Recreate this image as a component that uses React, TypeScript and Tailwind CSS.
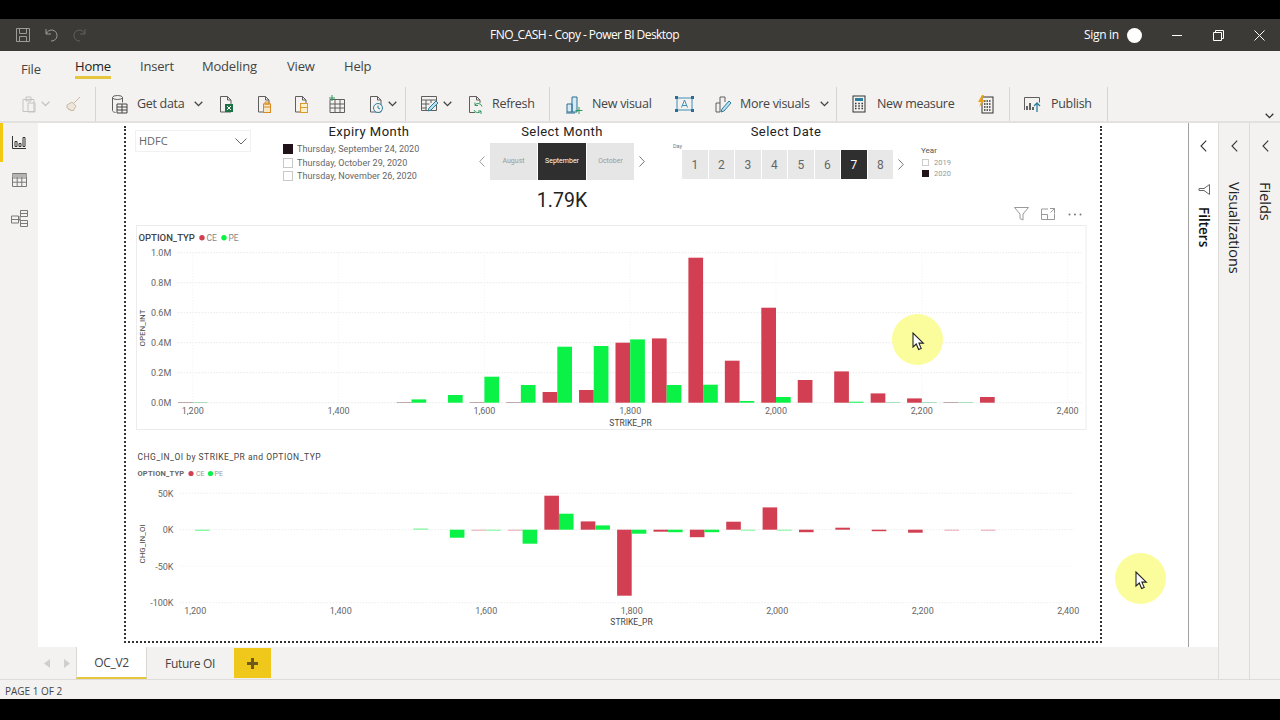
import React from "react";

const RED = "#d23f52";
const GREEN = "#0bf246";
const LINE = "#5f5e5c";

type SP = { children: React.ReactNode; w?: number; h?: number; vb?: string; cls?: string };
const Ico = ({ children, w = 18, h = 18, vb, cls = "" }: SP) => (
  <svg width={w} height={h} viewBox={vb ?? `0 0 ${w} ${h}`} fill="none" stroke={LINE} strokeWidth="1" className={`shrink-0 ${cls}`}>
    {children}
  </svg>
);
const Chev = ({ color = "#444" }: { color?: string }) => (
  <svg width="9" height="6" viewBox="0 0 9 6" fill="none" stroke={color} strokeWidth="1.3" className="shrink-0">
    <path d="M.7.8 4.5 4.6 8.3.8" />
  </svg>
);
const ChevSide = ({ dir, color = "#777", w = 6, h = 11 }: { dir: "l" | "r"; color?: string; w?: number; h?: number }) => (
  <svg width={w} height={h} viewBox="0 0 6 11" fill="none" stroke={color} strokeWidth="1" className="shrink-0">
    <path d={dir === "l" ? "M5.5.5 .7 5.5l4.8 5" : "M.5.5 5.3 5.5l-4.8 5"} />
  </svg>
);
const Sep = () => <div className="w-px h-[34px] bg-[#d6d5d3] shrink-0" />;
const DocBase = () => <path d="M3.5 1.5h7l3.5 3.5v12h-10.500zM10.500 1.500v3.500h3.500" />;

const Ribbon = () => (
  <div className="h-[72px] bg-[#f3f2f0] border-b-2 border-[#e2e1df] text-[#444] whitespace-nowrap">
    <div className="h-[36px] relative text-[13px] tracking-[-0.2px]">
      <div className="flex items-start pt-[6px] pl-[21px]">
        <span className="mt-[3px] w-[54px]">File</span>
        <span className="w-[65px] text-[#222] font-medium relative">
          Home
          <span className="absolute left-0 top-[19px] w-[36px] h-[3px] bg-[#e6c63e]" />
        </span>
        <span className="w-[62px]">Insert</span>
        <span className="w-[85px]">Modeling</span>
        <span className="w-[57px]">View</span>
        <span>Help</span>
      </div>
    </div>
    <div className="h-[34px] flex items-center text-[12.500px] tracking-[-0.3px] relative">
      <div className="w-[20px]" />
      <Ico w={17} h={18}><g stroke="#c4c3c1"><path d="M3 4.500h11v12h-11z" /><path d="M6 2h5v4h-5zM8 8h7v9h-7z" /></g></Ico>
      <div className="w-[4px]" />
      <Chev color="#c4c3c1" />
      <div className="w-[15px]" />
      <Ico w={17} h={18}><g stroke="#c9b9a2"><path d="M15 2 9 8M2 10l5-3 4 4-3 5-1-1-1 1-1-2-1 1-1-2-1 0z" fill="#ece6dc" /></g></Ico>
      <div className="w-[13px]" />
      <Sep />
      <div className="w-[15px]" />
      <Ico w={17} h={20}><ellipse cx="6.500" cy="3.500" rx="5" ry="2" /><path d="M1.500 3.500v13c0 1 1.500 1.800 3 2" /><path d="M11.500 3.500v5" /><path d="M6 10h10v9h-10zM6 13h10M6 16h10M11 10v9" stroke="#444" /></Ico>
      <span className="ml-[9px] w-[49px]">Get data</span>
      <div className="w-[8px]" />
      <Chev />
      <div className="w-[14px]" />
      <Ico w={17} h={19}><DocBase /><rect x="8" y="9" width="8" height="8" fill="#1e7145" stroke="none" /><path d="m10 11 4 4m0-4-4 4" stroke="#fff" /></Ico>
      <div className="w-[21px]" />
      <Ico w={17} h={19}><DocBase /><rect x="8.500" y="9" width="7" height="8.500" fill="#f6e7c8" stroke="#d98a1f" /><path d="M10 7h4v2h-4zM8.500 12h7" stroke="#d98a1f" /></Ico>
      <div className="w-[20px]" />
      <Ico w={17} h={19}><DocBase /><rect x="8.500" y="8.500" width="7" height="9" fill="#fbefd2" stroke="#dd9a2a" /><path d="M8.500 12.500h7" stroke="#dd9a2a" /></Ico>
      <div className="w-[19px]" />
      <Ico w={17} h={18}><path d="M2 4.500h14.500v13h-14.500zM2 9h14.500M2 13h14.500M7 4.500v13M12 4.500v13" /><path d="M4 0v6M1 3h6" stroke="#2d9a5a" /></Ico>
      <div className="w-[22px]" />
      <Ico w={17} h={19}><DocBase /><circle cx="11" cy="13" r="4.500" fill="#f3f2f0" stroke="#2a7f9e" /><path d="M11 10.500v2.500l2 1" stroke="#2a7f9e" /></Ico>
      <div className="w-[4px]" />
      <Chev />
      <div className="w-[8px]" />
      <Sep />
      <div className="w-[14px]" />
      <Ico w={19} h={18}><path d="M1.500 1.500h15v14h-15zM1.500 5h15M1.500 9h8M1.500 13h5M6 5v10M11 5v3" /><path d="m8 16 1-3 7-7 2 2-7 7z" fill="#bcdff0" stroke="#2a7f9e" /></Ico>
      <div className="w-[4px]" />
      <Chev />
      <div className="w-[14px]" />
      <Ico w={17} h={19}><path d="M9 17.500h-5.500v-16h7l3.500 3.500v3M10.500 1.500v3.500h3.500" /><path d="M16 11.500a4 4 0 0 0-7-1.500M8 15a4 4 0 0 0 7 1" stroke="#2e9a63" /><path d="M9 7.500v3h3M15 19v-3h-3" stroke="#2e9a63" /></Ico>
      <span className="ml-[9px] w-[42px]">Refresh</span>
      <div className="w-[15px]" />
      <Sep />
      <div className="w-[15px]" />
      <Ico w={18} h={19}><path d="M7 2h5v15h-5zM2 9h5v8h-5z" stroke="#2a6f93" fill="#d8ebf4" /><path d="M1 18h9" stroke="#2a6f93" /><path d="M14 12v7M10.500 15.500h7" stroke="#2a9a5a" /></Ico>
      <span className="ml-[9px] w-[63px]">New visual</span>
      <div className="w-[20px]" />
      <Ico w={19} h={16}><path d="M2 2h15v12h-15z" stroke="#3c8fb3" /><path d="M6.500 11.500 9.500 4l3 7.500M7.500 9.500h4" stroke="#3c8fb3" /><g fill="#2a6f93" stroke="none"><rect x="0" y="0" width="3" height="3" /><rect x="16" y="0" width="3" height="3" /><rect x="0" y="13" width="3" height="3" /><rect x="16" y="13" width="3" height="3" /></g></Ico>
      <div className="w-[20px]" />
      <Ico w={18} h={20}><path d="M2 9h4v9h-4zM6 3h5v5M6 9v-6" /><path d="m7 18 1-3 7-8 2 2-7 8z" fill="#bcdff0" stroke="#2a7f9e" /></Ico>
      <span className="ml-[8px] w-[72px]">More visuals</span>
      <div className="w-[8px]" />
      <Chev />
      <div className="w-[7px]" />
      <Sep />
      <div className="w-[15px]" />
      <Ico w={14} h={18}><rect x="1" y="1" width="12" height="16" stroke="#333" /><rect x="3" y="3" width="8" height="3" fill="#2a7f9e" stroke="none" /><path d="M3 8.500h1.500M6.300 8.500h1.500M9.500 8.500h1.500M3 11h1.500M6.300 11h1.500M9.500 11h1.500M3 13.500h1.500M6.300 13.500h1.500M9.500 13.500h1.500" stroke="#333" strokeWidth="1.500" /></Ico>
      <span className="ml-[11px] w-[80px]">New measure</span>
      <div className="w-[20px]" />
      <Ico w={17} h={19}><rect x="5" y="2" width="11" height="16" stroke="#333" /><path d="M7 6h7M7 9h7M7 12h7M7 15h7" stroke="#333" strokeWidth="1.500" strokeDasharray="1.500 1" /><path d="M5 0 1 7h3l-2 5 6-7h-3l2-5z" fill="#e8a317" stroke="none" /></Ico>
      <div className="w-[15px]" />
      <Sep />
      <div className="w-[13px]" />
      <Ico w={19} h={17}><path d="M1.500 14v-12.500h15v5" /><path d="M4 14v-4M7 14v-7M10 14v-3" stroke="#333" strokeWidth="1.500" /><path d="M14 16v-9M11 10l3-3 3 3" stroke="#2a7f9e" strokeWidth="1.300" /></Ico>
      <span className="ml-[9px] w-[41px]">Publish</span>
      <div className="w-[15px]" />
      <Sep />
      <div className="absolute right-[6px] top-[26px]"><Chev color="#333" /></div>
    </div>
  </div>
);

const TitleBar = () => (
  <div className="h-[32px] bg-[#3b3a36] flex items-center text-white text-[12px] relative whitespace-nowrap">
    <div className="flex items-center pl-[16px]">
      <Ico w={14} h={14}><g stroke="#9c9b98"><path d="M.5.500h13v13h-13zM3.500.500v5h7v-5M3.500 13.500v-5h7v5" /></g></Ico>
      <div className="w-[14px]" />
      <Ico w={14} h={14}><g stroke="#9c9b98"><path d="M2 1v5h5M2.300 5.800A5.500 5.500 0 1 1 7 13" /></g></Ico>
      <div className="w-[15px]" />
      <Ico w={14} h={14}><g stroke="#62615e"><path d="M12 1v5h-5M11.700 5.800A5.500 5.500 0 1 0 7 13" /></g></Ico>
    </div>
    <span className="ml-[403px] w-[594px] tracking-[-0.55px]">FNO_CASH - Copy - Power BI Desktop</span>
    <span className="w-[43px] tracking-[-0.3px]">Sign in</span>
    <div className="w-[15px] h-[15px] rounded-full bg-white" />
    <div className="ml-[30px] w-[10px] h-px bg-white" />
    <div className="ml-[31px]"><Ico w={11} h={11}><g stroke="#fff"><path d="M2.500 2.500v-2h8v8h-2M.5 2.500h8v8h-8z" /></g></Ico></div>
    <div className="ml-[30px]"><Ico w={11} h={11}><g stroke="#fff"><path d="m.5.500 10 10m0-10-10 10" /></g></Ico></div>
  </div>
);

const Rail = () => (
  <div className="w-[38px] bg-[#f3f2f0] flex flex-col items-center relative">
    <div className="absolute left-0 top-0 w-[3px] h-[39px] bg-[#f2c811]" />
    <div className="h-[38px] flex items-center">
      <Ico w={14} h={13}><g stroke="#333"><path d="M.5 0v12.500h13.500" /><path d="M3 10.500v-5h2v5zM7 10.500v-3h2v3zM11 10.500v-9h2v9z" /></g></Ico>
    </div>
    <div className="h-[38px] flex items-center">
      <Ico w={15} h={14}><g stroke="#7a7977"><path d="M.5.500h14v13h-14zM.5 5h14M.5 9.200h14M5.200 3v10.500M9.800 3v10.500" /><path d="M.5 2.500h14" strokeWidth="3" stroke="#b5b4b2" /></g></Ico>
    </div>
    <div className="h-[38px] flex items-center">
      <Ico w={17} h={17}><g stroke="#7a7977"><path d="M.5 6h7v7h-7zM.5 9.500h7M9.500.5h7v6h-7zM9.500 3.500h7M9.500 10.500h7v6h-7zM9.500 13.500h7M7.500 9.500h2M9 6v5" /></g></Ico>
    </div>
  </div>
);

const Slicers = () => (
  <div className="h-[81px] flex items-start text-[#444] whitespace-nowrap">
    <div className="ml-[9px] mt-[4px] w-[116px] h-[22px] border border-[#f1f1f1] flex items-center justify-between pl-[3px] pr-[3px] text-[11px] text-[#666]">
      <span>HDFC</span>
      <svg width="12" height="7" viewBox="0 0 12 7" fill="none" stroke="#666" strokeWidth="1"><path d="m.5.500 5.500 5.500 5.500-5.500" /></svg>
    </div>
    <div className="ml-[32px] w-[172px] font-[Roboto]">
      <div className="text-center text-[13px] tracking-[0.45px] text-[#222] leading-[11px]">Expiry Month</div>
      <div className="mt-[7px] flex flex-col gap-[3.500px] text-[9px] leading-[10px] text-[#666] tracking-[0.05px]">
        <div className="flex items-center gap-[4px]"><span className="w-[10px] h-[10px] bg-[#20141a]" /><span>Thursday, September 24, 2020</span></div>
        <div className="flex items-center gap-[4px]"><span className="w-[10px] h-[10px] border border-[#c9c9c9]" /><span>Thursday, October 29, 2020</span></div>
        <div className="flex items-center gap-[4px]"><span className="w-[10px] h-[10px] border border-[#c9c9c9]" /><span>Thursday, November 26, 2020</span></div>
      </div>
    </div>
    <div className="ml-[23px] w-[168px] font-[Roboto] flex flex-col items-center">
      <div className="text-center text-[13px] tracking-[0.45px] text-[#222] leading-[11px]">Select Month</div>
      <div className="mt-[6px] flex items-center">
        <ChevSide dir="l" color="#999" />
        <div className="ml-[5px] flex gap-[1px] text-[7px]">
          <span className="w-[47.500px] h-[37px] bg-[#e6e6e6] flex items-center justify-center text-[#999]">August</span>
          <span className="w-[47.500px] h-[37px] bg-[#2f2f2f] flex items-center justify-center text-white">September</span>
          <span className="w-[47.500px] h-[37px] bg-[#e6e6e6] flex items-center justify-center text-[#999]">October</span>
        </div>
        <div className="ml-[5px]"><ChevSide dir="r" color="#777" /></div>
      </div>
      <div className="mt-[9px] text-[19.500px] leading-[24px] text-[#222]">1.79K</div>
    </div>
    <div className="ml-[24px] w-[232px] font-[Roboto] relative">
      <div className="text-center text-[13px] tracking-[0.45px] text-[#222] leading-[11px]">Select Date</div>
      <div className="text-[5.500px] leading-[6px] text-[#777] ml-[3px] mt-[6px]">Day</div>
      <div className="mt-[1px] ml-[12px] flex items-center">
        <div className="flex gap-[1px] text-[12px] text-[#666]">
          {[1, 2, 3, 4, 5, 6, 7, 8].map((d) => (
            <span key={d} className={d === 7 ? "w-[25.500px] h-[29px] bg-[#2f2f2f] text-white flex items-center justify-center" : "w-[25.500px] h-[29px] bg-[#e8e8e8] flex items-center justify-center"}>{d}</span>
          ))}
        </div>
        <div className="ml-[5px]"><ChevSide dir="r" color="#777" /></div>
      </div>
    </div>
    <div className="ml-[20px] mt-[20px] font-[Roboto] text-[8px] text-[#555]">
      <div className="leading-[9px] -ml-[1px]">Year</div>
      <div className="mt-[3px] flex items-center gap-[5px] text-[7.500px] text-[#999] leading-[9px]"><span className="w-[7px] h-[7px] border border-[#ccc]" />2019</div>
      <div className="mt-[2px] flex items-center gap-[5px] text-[7.500px] text-[#999] leading-[9px]"><span className="w-[7px] h-[7px] bg-[#20141a]" />2020</div>
    </div>
  </div>
);

const HeaderIcons = () => (
  <div className="h-[14px] flex items-center pl-[888px]">
    <svg width="15" height="14" viewBox="0 0 15 14" fill="none" stroke="#999"><path d="M.5.500h14l-5.500 6.500v6l-3-1.500v-4.500z" /></svg>
    <svg width="14" height="12" viewBox="0 0 14 12" fill="none" stroke="#999" className="ml-[12px]"><path d="M7 1h-6.500v10.500h13v-6M.5 6.500h6v5M9 .5h4.500v4.500M13.500.5l-4 4" /></svg>
    <svg width="14" height="3" viewBox="0 0 14 3" fill="#777" className="ml-[13px]"><circle cx="1.500" cy="1.500" r="1" /><circle cx="7" cy="1.500" r="1" /><circle cx="12.500" cy="1.500" r="1" /></svg>
  </div>
);

type Bar = [number, number, number];
const data1: Bar[] = [
  [1200, 0.5, 0.5], [1500, 0.5, 3.3], [1550, 0, 7.7], [1600, 0.5, 26], [1650, 0.5, 17.7], [1700, 10.7, 56], [1750, 12.7, 56.7],
  [1800, 60, 63.3], [1850, 64.3, 17.7], [1900, 145, 18], [1950, 42, 1.7], [2000, 95, 5.7], [2050, 22.7, 0], [2100, 31.3, 1],
  [2150, 9.3, 0.5], [2200, 4.3, 0.5], [2250, 0.5, 0.5], [2300, 5.7, 0],
];
const data2: Bar[] = [
  [1200, 0, -1.2], [1500, 0, 1.2], [1550, 0, -8], [1600, -1, -1], [1650, -1, -14], [1700, 34, 16], [1750, 8.3, 4.3], [1800, -66, -4],
  [1850, -2, -2.5], [1900, -7.5, -2.5], [1950, 8, -1], [2000, 22.3, -1], [2050, -2.5, 0], [2100, 2, 0], [2150, -1.5, 0], [2200, -3, 0],
  [2250, -1, 0], [2300, -1, 0],
];
const ticks = [1200, 1400, 1600, 1800, 2000, 2200, 2400];

const Chart1 = () => {
  const x = (s: number) => 193.3 + (s - 1200) * 0.729;
  const base = 402.7;
  return (
    <svg width="951" height="205" viewBox="136.500 225 951 205" className="block" fontFamily="Roboto, sans-serif">
      <rect x="137" y="225.500" width="949.500" height="204" fill="#fff" stroke="#ececec" />
      <text x="139" y="241" fontSize="9.500" fontWeight="500" fill="#444">OPTION_TYP</text>
      <circle cx="202.500" cy="237.800" r="2.700" fill={RED} />
      <text x="207" y="241" fontSize="8.500" fill="#888">CE</text>
      <circle cx="224.500" cy="237.800" r="2.700" fill={GREEN} />
      <text x="229" y="241" fontSize="8.500" fill="#888">PE</text>
      {[0, 0.2, 0.4, 0.6, 0.8, 1].map((v) => {
        const y = base - v * 150;
        return (
          <g key={v}>
            <line x1="178" x2="1082" y1={y} y2={y} stroke="#e9e9e9" strokeDasharray="1.500 1.500" />
            <text x="171.800" y={y + 3.500} textAnchor="end" fontSize="9" fill="#666">{v.toFixed(1)}M</text>
          </g>
        );
      })}
      {ticks.map((t) => (
        <g key={t}>
          <line x1={x(t)} x2={x(t)} y1="252" y2={base} stroke="#f5f5f5" strokeDasharray="1.500 1.500" />
          <text x={x(t)} y="414" textAnchor="middle" fontSize="9" fill="#666">{t.toLocaleString("en-US")}</text>
        </g>
      ))}
      {data1.map(([s, c, p]) => (
        <g key={s}>
          {c > 0 && <rect x={x(s) - 14.7} y={base - c} width="14.7" height={c} fill={c < 1 ? "#8a5a60" : RED} />}
          {p > 0 && <rect x={x(s)} y={base - p} width="14.7" height={p} fill={p < 1 ? "#5dc983" : GREEN} />}
        </g>
      ))}
      <text x="631" y="425.500" textAnchor="middle" fontSize="8.500" fill="#444">STRIKE_PR</text>
      <text transform="translate(145 328) rotate(-90)" textAnchor="middle" fontSize="8" fill="#444">OPEN_INT</text>
    </svg>
  );
};

const Chart2 = () => {
  const x = (s: number) => 195.7 + (s - 1200) * 0.7275;
  const base = 529.7;
  return (
    <svg width="951" height="190" viewBox="136.500 445 951 190" className="block mt-[15px]" fontFamily="Roboto, sans-serif">
      <text x="138" y="460" fontSize="8.500" letterSpacing="0.5" fill="#444">CHG_IN_OI by STRIKE_PR and OPTION_TYP</text>
      <text x="138" y="476" fontSize="7.500" fontWeight="700" letterSpacing="0.2" fill="#666">OPTION_TYP</text>
      <circle cx="191.500" cy="473.500" r="2.600" fill={RED} />
      <text x="196.500" y="476" fontSize="7" fill="#999">CE</text>
      <circle cx="211" cy="473.500" r="2.600" fill={GREEN} />
      <text x="215" y="476" fontSize="7" fill="#999">PE</text>
      {[[50, "50K"], [0, "0K"], [-50, "-50K"], [-100, "-100K"]].map(([v, l]) => {
        const y = base - (v as number) * 0.73;
        return (
          <g key={l as string}>
            <line x1="180" x2="1075" y1={y} y2={y} stroke={v === -50 ? "#f5f5f5" : "#ededed"} strokeDasharray="1.500 1.500" />
            <text x="174" y={y + 3.500} textAnchor="end" fontSize="9" fill="#666">{l}</text>
          </g>
        );
      })}
      {ticks.map((t) => (
        <text key={t} x={x(t)} y="614" textAnchor="middle" fontSize="9" fill="#666">{t.toLocaleString("en-US")}</text>
      ))}
      {data2.map(([s, c, p]) => {
        const rc = Math.abs(c);
        const rp = Math.abs(p);
        return (
          <g key={s}>
            {c !== 0 && <rect x={x(s) - 14.6} y={c > 0 ? base - c : base} width="14.6" height={rc} fill={RED} opacity={rc <= 1 ? 0.45 : 1} />}
            {p !== 0 && <rect x={x(s)} y={p > 0 ? base - p : base} width="14.6" height={rp} fill={GREEN} opacity={rp <= 1.2 ? 0.55 : 1} />}
          </g>
        );
      })}
      <text x="632" y="624.500" textAnchor="middle" fontSize="8.500" fill="#444">STRIKE_PR</text>
      <text transform="translate(145 544) rotate(-90)" textAnchor="middle" fontSize="8" fill="#444">CHG_IN_OI</text>
    </svg>
  );
};

const Arrow = () => (
  <svg width="13" height="19" viewBox="0 0 13 19" fill="#fff" stroke="#222" strokeWidth="1.100">
    <path d="M1 1v14l3.300-3 2.300 5.500 2.600-1.100-2.300-5.300h4.400z" />
  </svg>
);
const Highlight = ({ cls }: { cls: string }) => (
  <div className={`absolute w-[51px] h-[51px] rounded-full bg-[#fbfd9c] flex items-center justify-center pl-[1px] pt-[3px] ${cls}`}>
    <Arrow />
  </div>
);

const Pane = ({ label, cls }: { label: string; cls: string }) => (
  <div className={`w-[31px] flex flex-col items-center pt-[17px] ${cls}`}>
    <ChevSide dir="l" color="#333" w={7} h={12} />
    <div className="mt-[30px] [writing-mode:vertical-rl] text-[14.500px] leading-[16px] text-[#222]">{label}</div>
  </div>
);

export default function App() {
  return (
    <div className="w-[1280px] h-[720px] bg-black pt-[19px] overflow-hidden relative [font-family:'Open_Sans',sans-serif]">
      <TitleBar />
      <Ribbon />
      <div className="h-[557px] flex border-b border-[#dddcda]">
        <Rail />
        <div className="w-[1180px] flex flex-col">
          <div className="h-[525px] flex">
            <div className="w-[1150px] bg-white pl-[86px] pt-[3px]">
              <div className="w-[978px] h-[517px] border-x-2 border-b-2 border-dotted border-[#333]">
                <Slicers />
                <HeaderIcons />
                <div className="ml-[10px] mt-[4px]">
                  <Chart1 />
                  <Chart2 />
                </div>
              </div>
            </div>
            <div className="w-[30px] bg-white border-l-[1.500px] border-[#a0a0a0] flex flex-col items-center pt-[17px]">
              <ChevSide dir="l" color="#333" w={7} h={12} />
              <svg width="12" height="11" viewBox="0 0 12 11" fill="none" stroke="#666" className="mt-[32px]"><path d="M11.500.5v10L6 6.500H1v-2h5z" /></svg>
              <div className="mt-[12px] [writing-mode:vertical-rl] text-[13.500px] leading-[16px] text-[#111] font-semibold">Filters</div>
            </div>
          </div>
          <div className="h-[32px] bg-[#f3f2f0] flex items-stretch text-[12px] text-[#444] tracking-[-0.3px]">
            <div className="w-[38px] flex items-center justify-between pl-[6px] pr-[6px]">
              <svg width="6" height="9" viewBox="0 0 6 9" fill="#cfcecc"><path d="M6 0v9L0 4.500z" /></svg>
              <svg width="6" height="9" viewBox="0 0 6 9" fill="#cfcecc"><path d="M0 0v9l6-4.500z" /></svg>
            </div>
            <div className="w-[71px] bg-white border-x border-[#d9d8d6] border-b-2 border-b-[#e6c63e] pt-[2px] flex items-center justify-center">OC_V2</div>
            <div className="w-[86px] pt-[2px] flex items-center justify-center">Future OI</div>
            <div className="w-[37px] my-[1px] ml-[1px] bg-[#f0c81c] flex items-center justify-center">
              <svg width="11" height="11" viewBox="0 0 11 11" fill="#6b5a1e"><path d="M4 0h3v4h4v3h-4v4h-3v-4h-4v-3h4z" /></svg>
            </div>
          </div>
        </div>
        <Pane label="Visualizations" cls="bg-[#f3f2f0] border-l border-[#dddcda]" />
        <Pane label="Fields" cls="bg-[#f3f2f0] border-l border-[#dddcda]" />
      </div>
      <div className="h-[19px] bg-[#f3f2f0] pl-[5px] text-[10px] leading-[22px] text-[#444]">PAGE 1 OF 2</div>
      <Highlight cls="left-[892px] top-[314px]" />
      <Highlight cls="left-[1115px] top-[553px]" />
    </div>
  );
}
